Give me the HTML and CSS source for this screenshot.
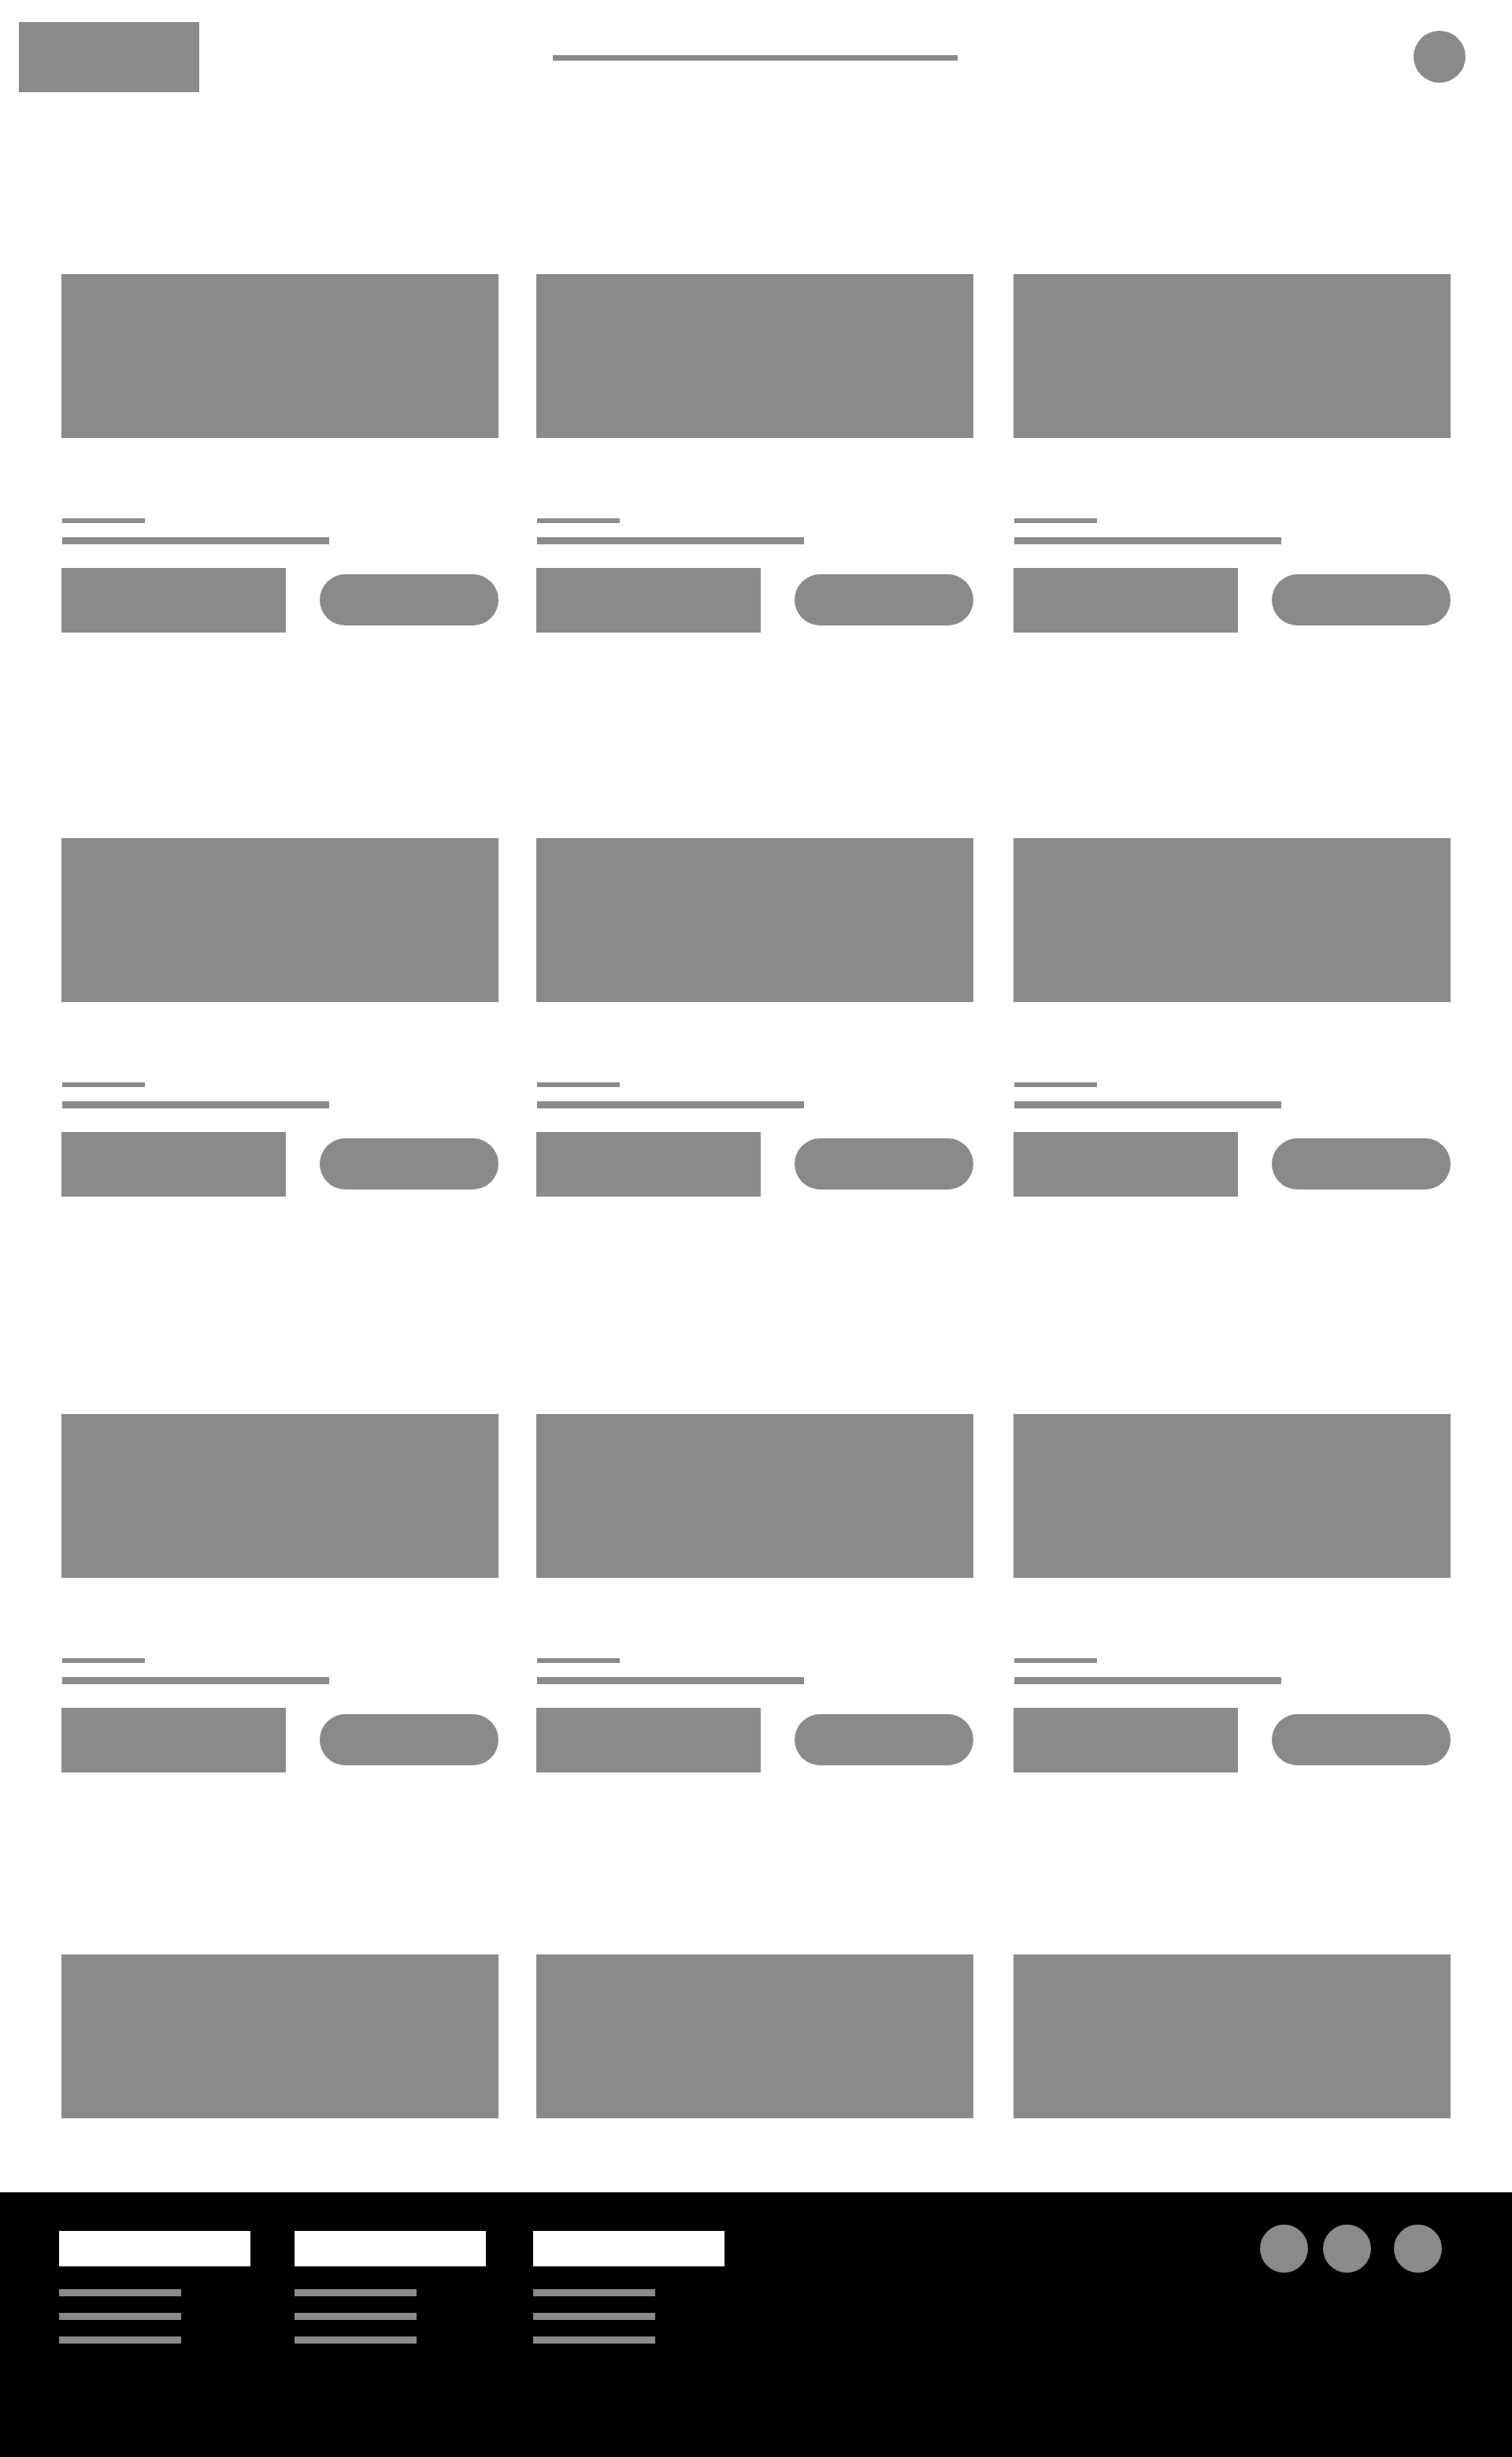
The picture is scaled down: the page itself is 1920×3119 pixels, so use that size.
FILE: index.html
```html
<!DOCTYPE html>
<html lang="en">
<head>
  <meta charset="utf-8">
  <meta name="viewport" content="width=device-width, initial-scale=1">
  <title>Catalogue</title>
  <link rel="stylesheet" href="styles.css">
</head>
<body>
  <header class="header">
    <a class="logo" href="#" aria-label="Home"></a>
    <div class="header-line"></div>
    <button class="avatar" type="button" aria-label="Account"></button>
  </header>

  <main class="catalogue">
    <section class="row">
      <article class="card">
        <div class="image"></div>
        <div class="caption"><div class="label"></div><div class="title"></div></div>
        <div class="actions"><div class="price"></div><button class="pill" type="button" aria-label="Select"></button></div>
      </article>
      <article class="card">
        <div class="image"></div>
        <div class="caption"><div class="label"></div><div class="title"></div></div>
        <div class="actions"><div class="price"></div><button class="pill" type="button" aria-label="Select"></button></div>
      </article>
      <article class="card">
        <div class="image"></div>
        <div class="caption"><div class="label"></div><div class="title"></div></div>
        <div class="actions"><div class="price"></div><button class="pill" type="button" aria-label="Select"></button></div>
      </article>
    </section>

    <section class="row row-second">
      <article class="card">
        <div class="image"></div>
        <div class="caption"><div class="label"></div><div class="title"></div></div>
        <div class="actions"><div class="price"></div><button class="pill" type="button" aria-label="Select"></button></div>
      </article>
      <article class="card">
        <div class="image"></div>
        <div class="caption"><div class="label"></div><div class="title"></div></div>
        <div class="actions"><div class="price"></div><button class="pill" type="button" aria-label="Select"></button></div>
      </article>
      <article class="card">
        <div class="image"></div>
        <div class="caption"><div class="label"></div><div class="title"></div></div>
        <div class="actions"><div class="price"></div><button class="pill" type="button" aria-label="Select"></button></div>
      </article>
    </section>

    <section class="row row-third">
      <article class="card">
        <div class="image"></div>
        <div class="caption"><div class="label"></div><div class="title"></div></div>
        <div class="actions"><div class="price"></div><button class="pill" type="button" aria-label="Select"></button></div>
      </article>
      <article class="card">
        <div class="image"></div>
        <div class="caption"><div class="label"></div><div class="title"></div></div>
        <div class="actions"><div class="price"></div><button class="pill" type="button" aria-label="Select"></button></div>
      </article>
      <article class="card">
        <div class="image"></div>
        <div class="caption"><div class="label"></div><div class="title"></div></div>
        <div class="actions"><div class="price"></div><button class="pill" type="button" aria-label="Select"></button></div>
      </article>
    </section>

    <section class="row row-last">
      <article class="card"><div class="image"></div></article>
      <article class="card"><div class="image"></div></article>
      <article class="card"><div class="image"></div></article>
    </section>
  </main>

  <footer class="footer">
    <nav class="footer-columns" aria-label="Footer">
      <div class="footer-column">
        <div class="footer-heading"></div>
        <a class="footer-link" href="#" aria-label="Link 1"></a>
        <a class="footer-link" href="#" aria-label="Link 2"></a>
        <a class="footer-link" href="#" aria-label="Link 3"></a>
      </div>
      <div class="footer-column">
        <div class="footer-heading"></div>
        <a class="footer-link" href="#" aria-label="Link 4"></a>
        <a class="footer-link" href="#" aria-label="Link 5"></a>
        <a class="footer-link" href="#" aria-label="Link 6"></a>
      </div>
      <div class="footer-column">
        <div class="footer-heading"></div>
        <a class="footer-link" href="#" aria-label="Link 7"></a>
        <a class="footer-link" href="#" aria-label="Link 8"></a>
        <a class="footer-link" href="#" aria-label="Link 9"></a>
      </div>
    </nav>
    <div class="social">
      <a class="social-link" href="#" aria-label="Social 1"></a>
      <a class="social-link" href="#" aria-label="Social 2"></a>
      <a class="social-link" href="#" aria-label="Social 3"></a>
    </div>
  </footer>
</body>
</html>
```
FILE: styles.css
```css
:root {
  --block: #8a8a8a;
  --paper: #fff;
}

* {
  box-sizing: border-box;
}

body {
  margin: 0;
  background: var(--paper);
  font-family: "Liberation Sans", sans-serif;
}

button {
  padding: 0;
  border: 0;
}

/* Header */
.header {
  display: grid;
  grid-template-columns: 1fr minmax(0, 514px) 1fr;
  align-items: start;
  padding-top: 28px;
  padding-right: 2px;
}

.logo {
  width: 229px;
  height: 89px;
  margin-left: 24px;
  background: var(--block);
}

.header-line {
  height: 7px;
  margin-top: 42px;
  background: var(--block);
}

.avatar {
  justify-self: end;
  width: 66px;
  height: 66px;
  margin-top: 11px;
  margin-right: 57px;
  border-radius: 50%;
  background: var(--block);
}

/* Catalogue: three card columns with gutters between them */
.catalogue {
  padding: 231px 78px 94px;
}

.row {
  display: grid;
  grid-template-columns: 1fr 48px 1fr 51px 1fr;
}

.row-second {
  margin-top: 261px;
}

.row-third {
  margin-top: 276px;
}

.row-last {
  margin-top: 231px;
}

.card:nth-child(1) {
  grid-column: 1;
}

.card:nth-child(2) {
  grid-column: 3;
}

.card:nth-child(3) {
  grid-column: 5;
}

.image {
  height: 208px;
  background: var(--block);
}

.caption {
  display: flex;
  flex-direction: column;
  gap: 18px;
  padding: 102px 0 30px 1px;
}

.label {
  width: 105px;
  height: 6px;
  background: var(--block);
}

.title {
  width: 339px;
  max-width: 100%;
  height: 9px;
  background: var(--block);
}

.actions {
  display: flex;
  justify-content: space-between;
  align-items: flex-start;
}

.price {
  width: 285px;
  height: 82px;
  background: var(--block);
}

.pill {
  width: 227px;
  height: 65px;
  margin-top: 8px;
  border-radius: 33px;
  background: var(--block);
}

/* Footer */
.footer {
  display: flex;
  justify-content: space-between;
  align-items: flex-start;
  padding: 41px 89px 144px 75px;
  background: #000;
}

.footer-columns {
  display: grid;
  grid-template-columns: 299px 303px 243px;
  padding-top: 8px;
}

.footer-column {
  display: flex;
  flex-direction: column;
  gap: 21px;
}

.footer-heading {
  width: 243px;
  height: 45px;
  margin-bottom: 8px;
  background: var(--paper);
}

.footer-link {
  width: 155px;
  height: 9px;
  background: var(--block);
}

.social {
  display: flex;
  gap: 19px;
}

.social-link {
  width: 61px;
  height: 61px;
  border-radius: 50%;
  background: var(--block);
}

.social-link:last-child {
  margin-left: 10px;
}
```
